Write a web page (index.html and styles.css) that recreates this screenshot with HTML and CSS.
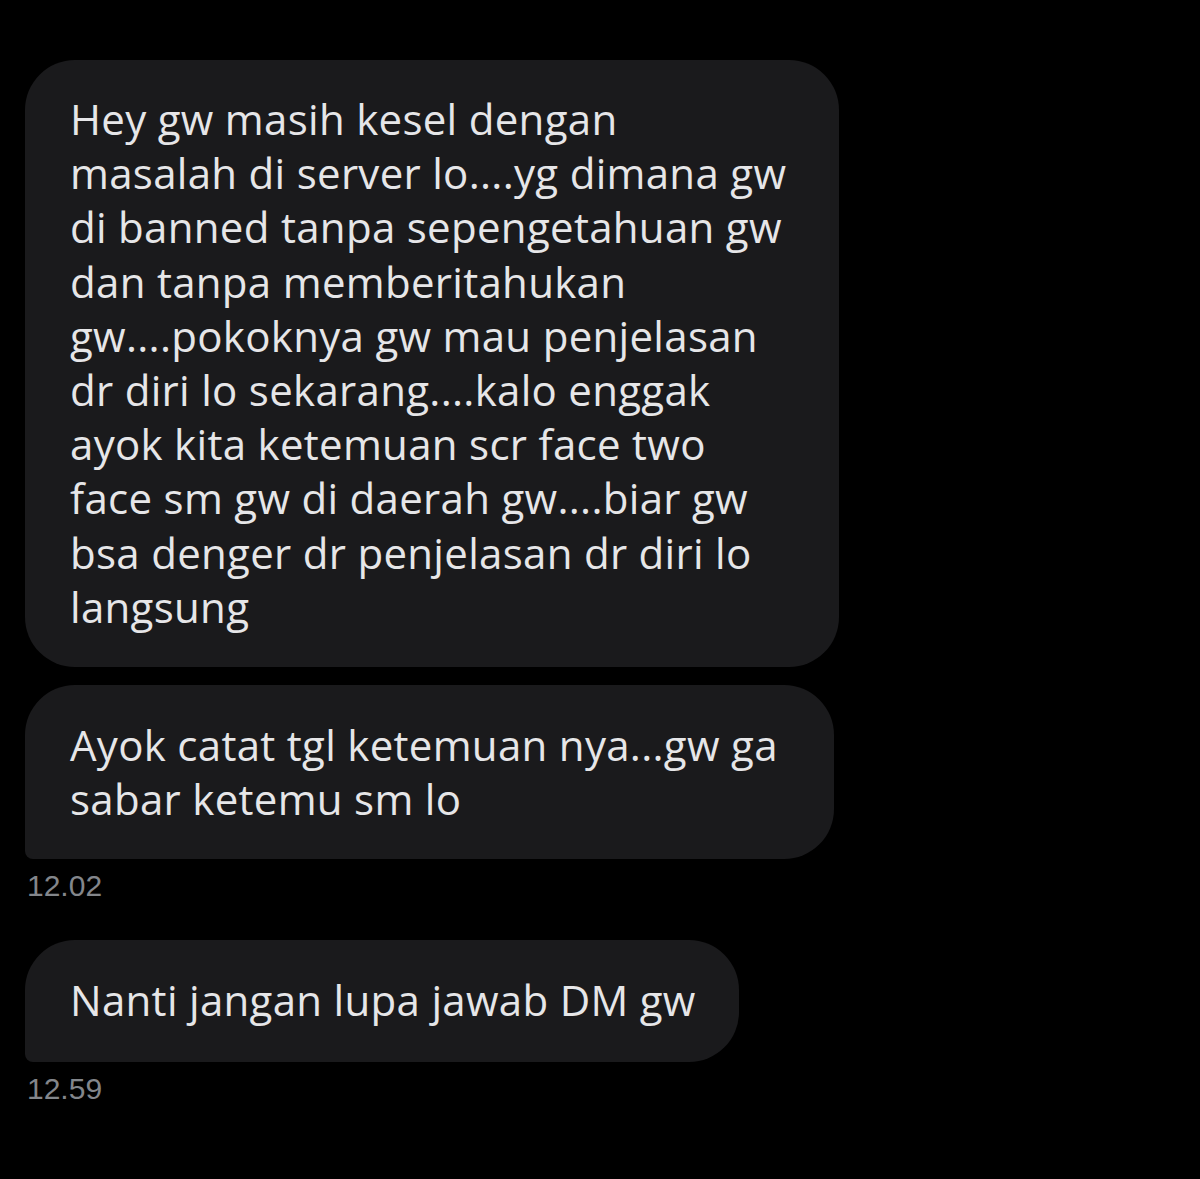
FILE: index.html
```html
<!DOCTYPE html>
<html lang="id">
<head>
<meta charset="utf-8">
<title>DM</title>
<link rel="stylesheet" href="styles.css">
</head>
<body>
<main class="chat">
  <div class="bubble b1 first">Hey gw masih kesel dengan<br>masalah di server lo....yg dimana gw<br>di banned tanpa sepengetahuan gw<br>dan tanpa memberitahukan<br>gw....pokoknya gw mau penjelasan<br>dr diri lo sekarang....kalo enggak<br>ayok kita ketemuan scr face two<br>face sm gw di daerah gw....biar gw<br>bsa denger dr penjelasan dr diri lo<br>langsung</div>
  <div class="bubble b2 last">Ayok catat tgl ketemuan nya...gw ga<br>sabar ketemu sm lo</div>
  <div class="time">12.02</div>
  <div class="bubble b3 last">Nanti jangan lupa jawab DM gw</div>
  <div class="time">12.59</div>
</main>
</body>
</html>
```
FILE: styles.css
```css
html, body {
  margin: 0;
  padding: 0;
  background: #000;
}
body {
  width: 1200px;
  height: 1179px;
  overflow: hidden;
}
.chat {
  display: flex;
  flex-direction: column;
  align-items: flex-start;
  padding: 60px 0 0 25px;
  font-family: "Open Sans", "Noto Sans", sans-serif;
}
.bubble {
  box-sizing: border-box;
  background: #1a1a1c;
  color: #e6e6e8;
  font-size: 42px;
  letter-spacing: 0.3px;
  line-height: 54px;
  padding: 32px 20px 32px 45px;
  border-radius: 50px;
  white-space: nowrap;
}
.bubble.last {
  border-bottom-left-radius: 8px;
}
.b1 { width: 814px; line-height: 54.2px; padding-bottom: 33px; }
.b2 { width: 809px; margin-top: 18px; padding-top: 33px; padding-bottom: 33px; }
.b3 { width: 714px; padding-top: 33px; padding-bottom: 35px; }
.time {
  color: #83868b;
  font-family: "Liberation Sans", "Open Sans", sans-serif;
  font-size: 30px;
  line-height: 34px;
  margin: 10px 0 37px 2px;
}
```
